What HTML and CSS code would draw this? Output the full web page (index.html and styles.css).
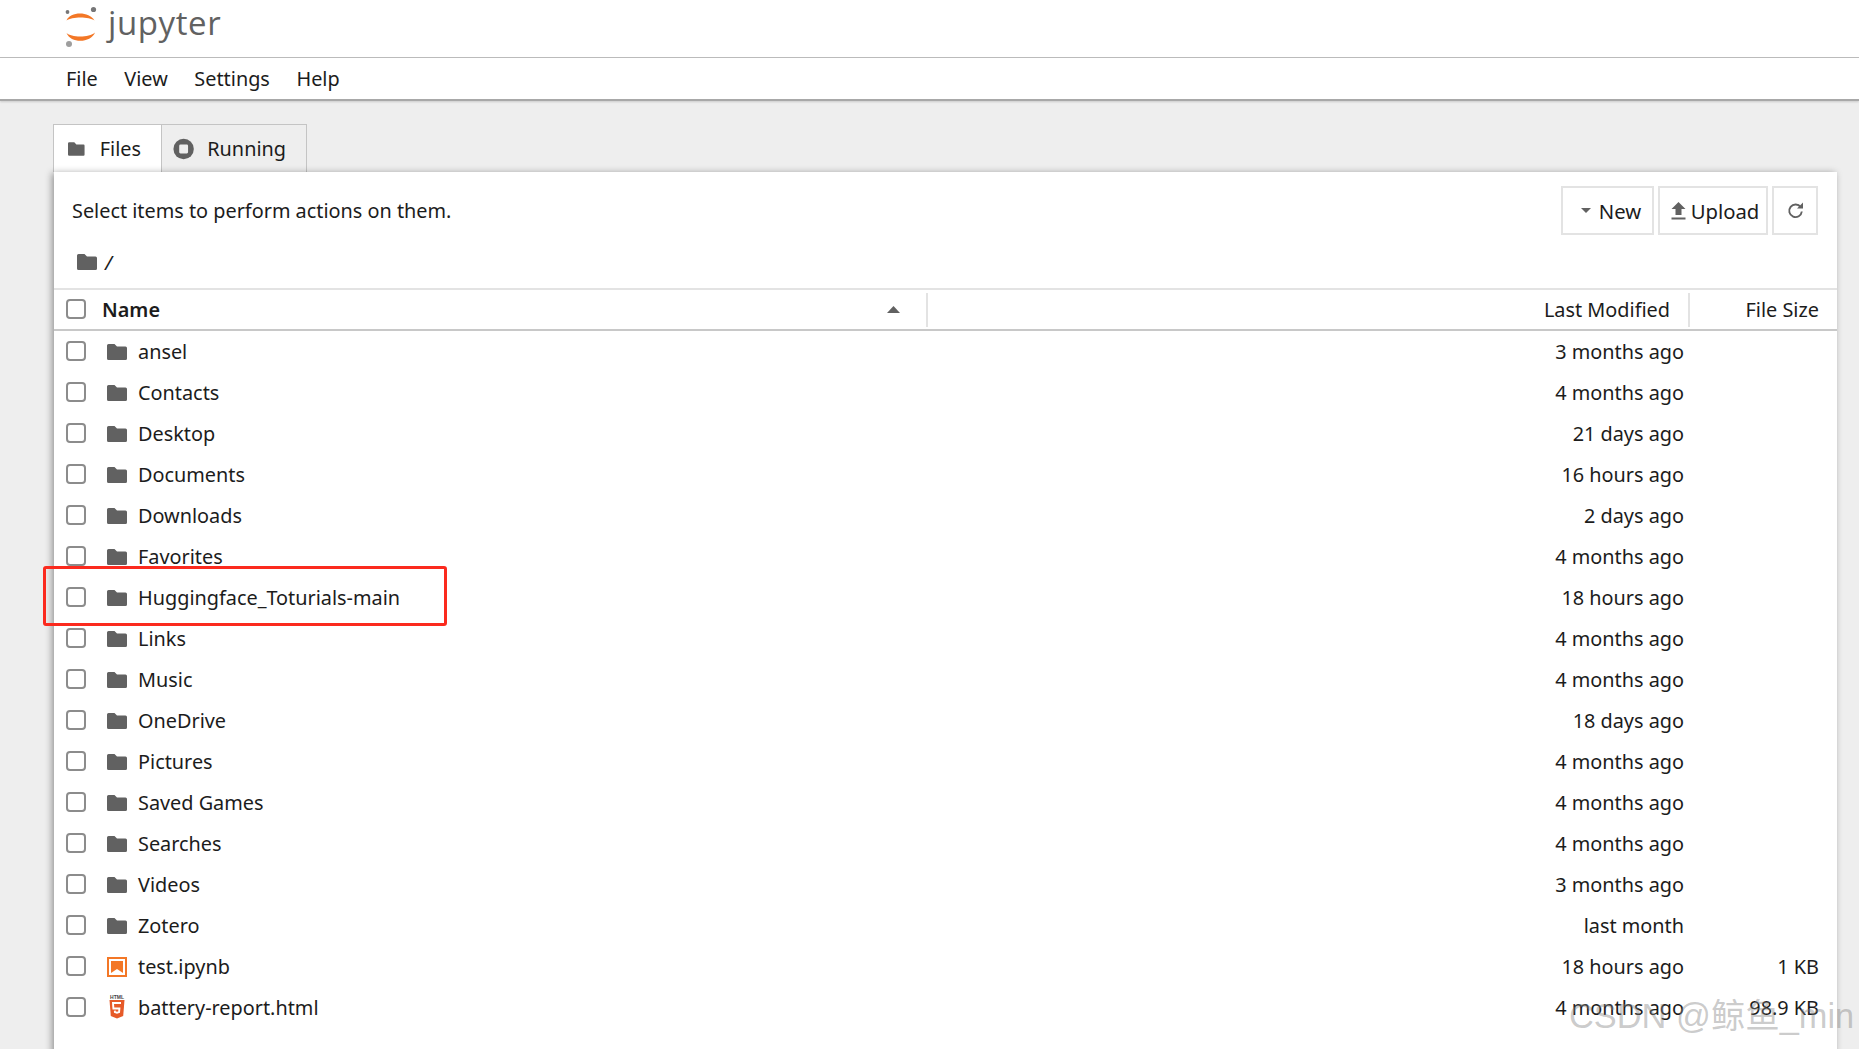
FILE: index.html
```html
<!DOCTYPE html>
<html lang="en">
<head>
<meta charset="utf-8">
<title>Jupyter</title>
<link rel="stylesheet" href="styles.css">
</head>
<body>
<svg class="defs" width="0" height="0" aria-hidden="true">
  <symbol id="folder" viewBox="0 0 20 16"><path d="M1.5 0H7.5L10 2.6H18.5A1.5 1.5 0 0 1 20 4.1V14.5A1.5 1.5 0 0 1 18.5 16H1.5A1.5 1.5 0 0 1 0 14.5V1.5A1.5 1.5 0 0 1 1.5 0Z" fill="#616161"/></symbol>
</svg>
<header class="topbar">
  <svg class="logo" viewBox="0 0 32 41" width="32" height="41" aria-hidden="true">
    <path d="M1.5 14.5C5 5.5 24 5 29.5 14.5C24 10.5 7 10.5 1.5 14.5Z" fill="#f37726"/>
    <path d="M1.5 27C6 31.5 24 32 30 26.5C26 37 6 38 1.5 27Z" fill="#f37726"/>
    <circle cx="28.5" cy="3.5" r="2.6" fill="#767677"/>
    <circle cx="2.5" cy="6" r="1.9" fill="#767677"/>
    <circle cx="4" cy="38" r="3" fill="#9e9e9e"/>
  </svg>
  <span class="wordmark">jupyter</span>
</header>
<nav class="menubar">
  <span class="menu-item">File</span>
  <span class="menu-item">View</span>
  <span class="menu-item">Settings</span>
  <span class="menu-item">Help</span>
</nav>
<main class="content">
  <div class="tabs">
    <div class="tab tab-active">
      <svg class="icon-folder" width="20" height="16"><use href="#folder"/></svg>
      <span>Files</span>
    </div>
    <div class="tab">
      <svg width="24" height="24" viewBox="0 0 24 24" aria-hidden="true"><circle cx="12" cy="12" r="11.5" fill="#616161"/><rect x="7" y="7" width="10" height="10" rx="1.5" fill="#eee"/></svg>
      <span>Running</span>
    </div>
  </div>
  <section class="panel">
    <div class="toolbar">
      <span class="hint">Select items to perform actions on them.</span>
      <div class="buttons">
        <button class="btn btn-new"><svg width="10" height="5" viewBox="0 0 10 5" aria-hidden="true"><path d="M0 0H10L5 5Z" fill="#616161"/></svg>New</button>
        <button class="btn btn-upload"><svg width="15" height="18" viewBox="0 0 15 18" aria-hidden="true"><path d="M7.5 0L14.5 7H10.5V13H4.5V7H.5ZM.5 15.5H14.5V17.5H.5Z" fill="#616161"/></svg>Upload</button>
        <button class="btn btn-refresh"><svg width="17" height="17" viewBox="0 0 17 17" aria-hidden="true"><path d="M13.7 5.2A6.3 6.3 0 1 0 14.8 9.5" fill="none" stroke="#616161" stroke-width="1.9"/><path d="M10 6.4H16V.6Z" fill="#616161"/></svg></button>
      </div>
    </div>
    <div class="crumbs">
      <svg width="20" height="16"><use href="#folder"/></svg>
      <span class="slash">/</span>
    </div>
    <div class="table-head">
      <span class="check"></span>
      <span class="col-name"><b>Name</b><svg width="13" height="7" viewBox="0 0 13 7" aria-hidden="true"><path d="M6.5 0L13 7H0Z" fill="#616161"/></svg></span>
      <span class="col-mod">Last Modified</span>
      <span class="col-size">File Size</span>
    </div>
    <ul class="rows">
      <li class="row"><span class="check"></span><svg class="row-icon" width="20" height="16"><use href="#folder"/></svg><span class="row-name">ansel</span><span class="row-date">3 months ago</span><span class="row-size"></span></li>
      <li class="row"><span class="check"></span><svg class="row-icon" width="20" height="16"><use href="#folder"/></svg><span class="row-name">Contacts</span><span class="row-date">4 months ago</span><span class="row-size"></span></li>
      <li class="row"><span class="check"></span><svg class="row-icon" width="20" height="16"><use href="#folder"/></svg><span class="row-name">Desktop</span><span class="row-date">21 days ago</span><span class="row-size"></span></li>
      <li class="row"><span class="check"></span><svg class="row-icon" width="20" height="16"><use href="#folder"/></svg><span class="row-name">Documents</span><span class="row-date">16 hours ago</span><span class="row-size"></span></li>
      <li class="row"><span class="check"></span><svg class="row-icon" width="20" height="16"><use href="#folder"/></svg><span class="row-name">Downloads</span><span class="row-date">2 days ago</span><span class="row-size"></span></li>
      <li class="row"><span class="check"></span><svg class="row-icon" width="20" height="16"><use href="#folder"/></svg><span class="row-name">Favorites</span><span class="row-date">4 months ago</span><span class="row-size"></span></li>
      <li class="row"><span class="check"></span><svg class="row-icon" width="20" height="16"><use href="#folder"/></svg><span class="row-name">Huggingface_Toturials-main</span><span class="row-date">18 hours ago</span><span class="row-size"></span></li>
      <li class="row"><span class="check"></span><svg class="row-icon" width="20" height="16"><use href="#folder"/></svg><span class="row-name">Links</span><span class="row-date">4 months ago</span><span class="row-size"></span></li>
      <li class="row"><span class="check"></span><svg class="row-icon" width="20" height="16"><use href="#folder"/></svg><span class="row-name">Music</span><span class="row-date">4 months ago</span><span class="row-size"></span></li>
      <li class="row"><span class="check"></span><svg class="row-icon" width="20" height="16"><use href="#folder"/></svg><span class="row-name">OneDrive</span><span class="row-date">18 days ago</span><span class="row-size"></span></li>
      <li class="row"><span class="check"></span><svg class="row-icon" width="20" height="16"><use href="#folder"/></svg><span class="row-name">Pictures</span><span class="row-date">4 months ago</span><span class="row-size"></span></li>
      <li class="row"><span class="check"></span><svg class="row-icon" width="20" height="16"><use href="#folder"/></svg><span class="row-name">Saved Games</span><span class="row-date">4 months ago</span><span class="row-size"></span></li>
      <li class="row"><span class="check"></span><svg class="row-icon" width="20" height="16"><use href="#folder"/></svg><span class="row-name">Searches</span><span class="row-date">4 months ago</span><span class="row-size"></span></li>
      <li class="row"><span class="check"></span><svg class="row-icon" width="20" height="16"><use href="#folder"/></svg><span class="row-name">Videos</span><span class="row-date">3 months ago</span><span class="row-size"></span></li>
      <li class="row"><span class="check"></span><svg class="row-icon" width="20" height="16"><use href="#folder"/></svg><span class="row-name">Zotero</span><span class="row-date">last month</span><span class="row-size"></span></li>
      <li class="row"><span class="check"></span><svg class="row-icon" width="20" height="20" viewBox="0 0 20 20" aria-hidden="true"><path d="M0 0H20V20H0Z" fill="#f37726"/><path d="M2 2H18V18H2Z" fill="#fff"/><path d="M4 4H16V16L10 12L4 16Z" fill="#f37726"/></svg><span class="row-name">test.ipynb</span><span class="row-date">18 hours ago</span><span class="row-size">1 KB</span></li>
      <li class="row"><span class="check"></span><svg class="row-icon row-html" width="20" height="24" viewBox="0 0 20 24" aria-hidden="true"><text class="html-label" x="10" y="4">HTML</text><path d="M2.5 5H17.5L16.2 21L10 23.5L3.8 21Z" fill="#e65a28"/><path d="M14 8H6L6.4 13.5H12.4L12.1 17L10 17.8L7.9 17L7.8 15.6" fill="none" stroke="#fff" stroke-width="1.9"/></svg><span class="row-name">battery-report.html</span><span class="row-date">4 months ago</span><span class="row-size">98.9 KB</span></li>
    </ul>
  </section>
</main>
<div class="highlight"></div>
<div class="watermark">CSDN @鲸鱼_min</div>
</body>
</html>
```
FILE: styles.css
```css
* { box-sizing: border-box; }
html, body { margin: 0; height: 1049px; overflow: hidden; }
body {
  background: #eee;
  color: #1c1c1c;
  font-family: "Noto Sans", "Open Sans", sans-serif;
  font-size: 19.85px;
  position: relative;
}
.defs { position: absolute; }
.topbar {
  height: 58px;
  background: #fff;
  border-bottom: 1px solid #bdbdbd;
  display: flex;
  align-items: flex-start;
  padding: 6px 0 0 65px;
}
.wordmark {
  color: #616161;
  font-family: "Open Sans", sans-serif;
  font-size: 33px;
  letter-spacing: .6px;
  line-height: 34px;
  margin-left: 11px;
}
.menubar {
  height: 43px;
  background: #fff;
  display: flex;
  align-items: center;
  padding-left: 66px;
  gap: 26.6px;
  border-bottom: 2px solid #a8a8a8;
  box-shadow: 0 1px 2px rgba(0,0,0,.15);
}
.content { padding: 23px 22px 0 53px; }
.tabs { display: flex; height: 48px; }
.tab {
  height: 48px;
  display: flex;
  align-items: center;
  gap: 13px;
  border: 1px solid #c4c4c4;
  border-bottom: 0;
  border-left: 0;
  padding: 0 20px 0 11px;
  background: #eee;
  width: 145px;
}
.tab-active {
  background: #fff;
  width: 109px;
  border-left: 1px solid #c4c4c4;
  padding-left: 14px;
  gap: 15px;
}
.panel {
  background: #fff;
  height: 900px;
  margin-left: 1px;
  box-shadow: -2px 1px 7px rgba(0,0,0,.38);
  position: relative;
}
.toolbar {
  height: 70px;
  display: flex;
  justify-content: space-between;
  align-items: flex-start;
  padding: 14px 19px 0 18px;
}
.hint { line-height: 49px; }
.buttons { display: flex; gap: 4px; }
.btn {
  height: 49px;
  border: 2px solid #e3e3e3;
  background: #fff;
  font: inherit;
  font-size: 20.3px;
  color: inherit;
  display: flex;
  align-items: center;
  justify-content: center;
  padding: 0;
}
.btn-new { width: 93px; gap: 8px; padding-left: 7px; }
.btn-upload { width: 110px; gap: 5px; padding-left: 4px; }
.btn-refresh { width: 46px; }
.crumbs {
  height: 46px;
  display: flex;
  align-items: center;
  gap: 8px;
  padding: 0 0 6px 23px;
}
.slash { font-style: italic; }
.table-head {
  height: 43px;
  border-top: 2px solid #e3e3e3;
  border-bottom: 2px solid #c8c8c8;
  display: flex;
  align-items: center;
  padding-left: 12px;
}
.check {
  flex: none;
  width: 20px;
  height: 20px;
  margin-top: -2px;
  border: 2px solid #8c8c8c;
  border-radius: 4px;
  background: #fff;
}
.col-name {
  width: 826px;
  height: 34px;
  margin-left: 16px;
  padding-right: 26px;
  border-right: 2px solid #e3e3e3;
  display: flex;
  align-items: center;
  justify-content: space-between;
}
.col-name b { font-weight: 600; }
.col-mod {
  width: 762px;
  height: 34px;
  line-height: 34px;
  text-align: right;
  padding-right: 18px;
  border-right: 2px solid #e3e3e3;
}
.col-size {
  flex: 1;
  text-align: right;
  padding-right: 18px;
}
.rows { list-style: none; margin: 0; padding: 0; }
.row {
  height: 41px;
  display: flex;
  align-items: center;
  padding-left: 12px;
}
.row-icon { flex: none; margin-left: 21px; margin-right: 11px; }
.row-html { margin-top: -2px; }
.html-label {
  font-family: "Liberation Sans", sans-serif;
  font-size: 5px;
  font-weight: 700;
  text-anchor: middle;
  fill: #444;
}
.row-name { flex: 1; }
.row-date { width: 300px; text-align: right; }
.row-size { width: 153px; text-align: right; padding-right: 18px; }
.highlight {
  position: absolute;
  left: 43px;
  top: 566px;
  width: 404px;
  height: 60px;
  border: 3px solid #fb2a1e;
  border-radius: 3px;
}
.watermark {
  position: absolute;
  left: 1569px;
  top: 996px;
  font-family: "Liberation Sans", "Noto Sans CJK SC", sans-serif;
  font-size: 34.4px;
  line-height: 40px;
  color: rgba(130,130,130,.42);
  white-space: nowrap;
}
```
